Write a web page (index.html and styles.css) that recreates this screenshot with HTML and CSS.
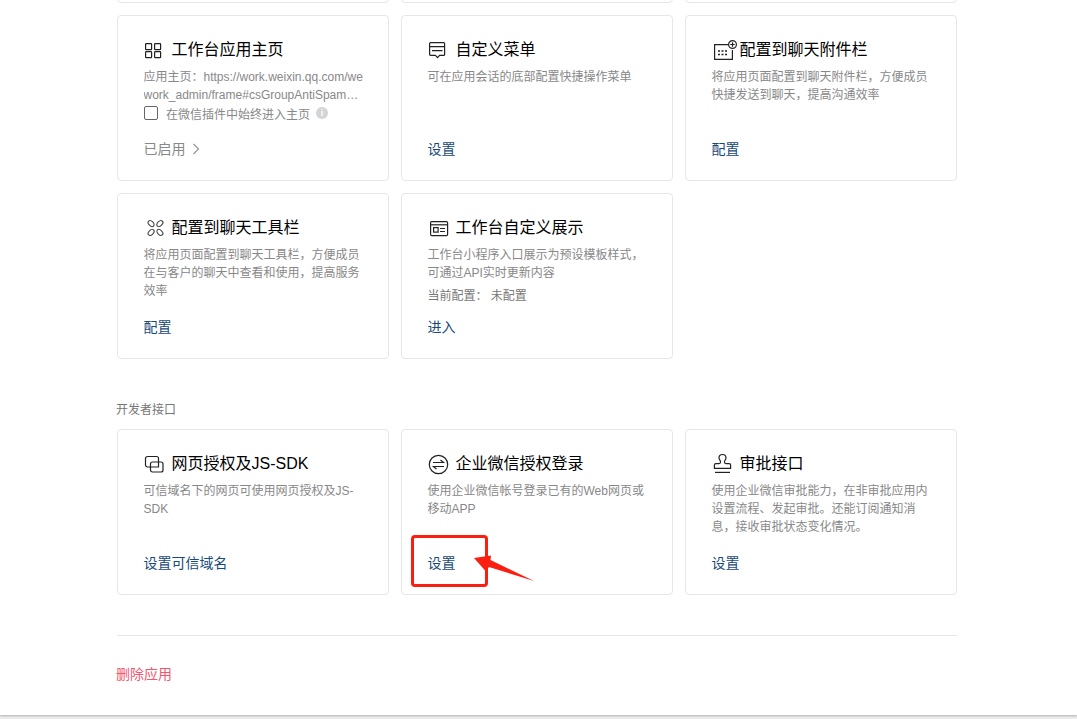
FILE: index.html
```html
<!DOCTYPE html>
<html lang="zh-CN">
<head>
<meta charset="utf-8">
<title>应用管理</title>
<link rel="stylesheet" href="styles.css">
</head>
<body>
<main class="page">
  <div class="content">
    <section class="grid">
      <article class="card"></article>
      <article class="card"></article>
      <article class="card"></article>

      <article class="card">
        <h3 class="head"><span class="ico"><svg width="28" height="24" viewBox="0 0 28 24" fill="none" stroke="#222" stroke-width="1.2"><rect x="1.6" y="5.6" width="6" height="6" rx=".6"/><rect x="10.6" y="5.6" width="6" height="6" rx=".6"/><rect x="1.6" y="13.6" width="6" height="6" rx=".6"/><rect x="10.6" y="13.6" width="6" height="6" rx=".6"/></svg></span>工作台应用主页</h3>
        <p class="desc clamp">应用主页：https://work.weixin.qq.com/wework_admin/frame#csGroupAntiSpamConfigurationPage</p>
        <label class="check"><span class="box"></span>在微信插件中始终进入主页<span class="info">i</span></label>
        <div class="foot muted">已启用<svg class="chev" width="8" height="12" viewBox="0 0 8 12" fill="none" stroke="#999" stroke-width="1.3"><path d="M1.5 1l5 5-5 5"/></svg></div>
      </article>

      <article class="card">
        <h3 class="head"><span class="ico"><svg width="28" height="24" viewBox="0 0 28 24" fill="none" stroke="#222" stroke-width="1.2"><path d="M2.6 4.6h13a1 1 0 0 1 1 1v10.8a1 1 0 0 1-1 1h-4l-2.1 2.2-2.1-2.2H2.6a1 1 0 0 1-1-1V5.600a1 1 0 0 1 1-1z"/><path d="M1.600 8.600h15M4 12.600h10.500"/></svg></span>自定义菜单</h3>
        <p class="desc">可在应用会话的底部配置快捷操作菜单</p>
        <a class="foot link">设置</a>
      </article>

      <article class="card">
        <h3 class="head"><span class="ico"><svg width="28" height="24" viewBox="0 0 28 24" fill="none" stroke="#222" stroke-width="1.200"><path d="M17 6.600H2.600v14.800h17.800V12"/><circle cx="20.500" cy="6.500" r="3.900"/><path d="M20.500 4.300v4.400M18.300 6.500h4.400"/><path d="M6 13h2M9.500 13h2M13 13h2M6 16.500h2M9.500 16.500h2M13 16.500h2" stroke-width="1.600"/></svg></span>配置到聊天附件栏</h3>
        <p class="desc">将应用页面配置到聊天附件栏，方便成员快捷发送到聊天，提高沟通效率</p>
        <a class="foot link">配置</a>
      </article>

      <article class="card">
        <h3 class="head"><span class="ico"><svg width="28" height="24" viewBox="0 0 28 24" fill="none" stroke="#444" stroke-width="1.100"><g transform="translate(11.500 12)"><ellipse cx="-4.400" cy="-4.400" rx="2.300" ry="3.500" transform="rotate(-45 -4.400 -4.400)"/><ellipse cx="4.400" cy="-4.400" rx="2.300" ry="3.500" transform="rotate(45 4.400 -4.400)"/><ellipse cx="-4.400" cy="4.400" rx="2.300" ry="3.500" transform="rotate(45 -4.400 4.400)"/><ellipse cx="4.400" cy="4.400" rx="2.300" ry="3.500" transform="rotate(-45 4.400 4.400)"/></g></svg></span>配置到聊天工具栏</h3>
        <p class="desc">将应用页面配置到聊天工具栏，方便成员在与客户的聊天中查看和使用，提高服务效率</p>
        <a class="foot link">配置</a>
      </article>

      <article class="card">
        <h3 class="head"><span class="ico"><svg width="28" height="24" viewBox="0 0 28 24" fill="none" stroke="#222" stroke-width="1.200"><rect x="2.600" y="5.600" width="17" height="14" rx="1.200"/><path d="M2.600 8.800h17"/><rect x="5.600" y="11.600" width="4.500" height="4.500"/><path d="M12 12.500h5M12 15.500h5"/></svg></span>工作台自定义展示</h3>
        <p class="desc">工作台小程序入口展示为预设模板样式，可通过API实时更新内容</p>
        <p class="desc current">当前配置： 未配置</p>
        <a class="foot link">进入</a>
      </article>
    </section>

    <h2 class="label">开发者接口</h2>
    <section class="grid">
      <article class="card">
        <h3 class="head"><span class="ico"><svg width="28" height="24" viewBox="0 0 28 24" fill="none" stroke="#222" stroke-width="1.200"><path d="M6 15H3.500A2 2 0 0 1 1.500 13V6.500a2 2 0 0 1 2-2h9a2 2 0 0 1 2 2V10"/><rect x="6.500" y="10" width="12.500" height="10" rx="2"/><path d="M6.500 15h8v-5"/></svg></span>网页授权及JS-SDK</h3>
        <p class="desc">可信域名下的网页可使用网页授权及JS-SDK</p>
        <a class="foot link">设置可信域名</a>
      </article>

      <article class="card">
        <h3 class="head"><span class="ico"><svg width="28" height="24" viewBox="0 0 28 24" fill="none" stroke="#222" stroke-width="1.200"><circle cx="10.500" cy="12.500" r="9.200"/><path d="M5 10.500h10.500l-3-2.500M16 14.500H5.500l3 2.500"/></svg></span>企业微信授权登录</h3>
        <p class="desc">使用企业微信帐号登录已有的Web网页或移动APP</p>
        <a class="foot link">设置</a>
        <span class="mark"></span>
        <svg class="arrow" width="62" height="33" viewBox="0 0 62 33"><path fill="#fb1f12" d="M1 8 18 5.500 17.500 10 61 31 16 17 12.500 21z"/></svg>
      </article>

      <article class="card">
        <h3 class="head"><span class="ico"><svg width="28" height="24" viewBox="0 0 28 24" fill="none" stroke="#222" stroke-width="1.200"><path d="M7 11.600c1.300 0 1.600-.8 1.600-1.800 0-1-1.600-2.300-1.600-3.800a3.500 3.500 0 0 1 7 0c0 1.500-1.600 2.800-1.600 3.800 0 1 .3 1.800 1.600 1.800h3.100a1.500 1.500 0 0 1 1.500 1.500v3.300H2.400v-3.300a1.500 1.500 0 0 1 1.500-1.500z"/><path d="M3 20.400h15"/></svg></span>审批接口</h3>
        <p class="desc">使用企业微信审批能力，在非审批应用内设置流程、发起审批。还能订阅通知消息，接收审批状态变化情况。</p>
        <a class="foot link">设置</a>
      </article>
    </section>

    <hr class="rule">
    <a class="danger">删除应用</a>
  </div>
</main>
</body>
</html>
```

FILE: styles.css
```css
* { box-sizing: border-box; }

html, body {
  margin: 0;
  height: 100%;
  overflow: hidden;
}

body {
  background: #ececec;
  font-family: "Liberation Sans", "Noto Sans CJK SC", sans-serif;
}

.page {
  height: 715px;
  background: #fff;
  overflow: hidden;
  box-shadow: 0 1px 2px rgba(0, 0, 0, .25);
}

.content {
  width: 957px;
  margin-top: -163px;
  padding-left: 117px;
}

.grid {
  display: grid;
  grid-template-columns: repeat(3, 272px);
  grid-auto-rows: 166px;
  gap: 12px;
}

.card {
  position: relative;
  display: flex;
  flex-direction: column;
  padding: 22px 21px 21px 25.5px;
  border: 1px solid #e4e6e9;
  border-radius: 4px;
  background: #fff;
}

.head {
  display: flex;
  align-items: center;
  height: 24px;
  margin: 0 0 6px;
  font-size: 16px;
  font-weight: 400;
  line-height: 24px;
  color: #000;
}

.ico {
  flex: none;
  display: block;
  width: 28px;
  height: 24px;
}

.ico svg {
  display: block;
  margin-left: .5px;
}

.desc {
  margin: 0;
  font-size: 12px;
  line-height: 18px;
  color: #888;
}

.clamp {
  display: -webkit-box;
  -webkit-box-orient: vertical;
  -webkit-line-clamp: 2;
  max-width: 222px;
  overflow: hidden;
  word-break: break-all;
}

.current {
  margin-top: 5px;
  color: #777;
}

.check {
  display: flex;
  align-items: center;
  height: 18px;
  margin-top: 0;
  font-size: 12px;
  color: #888;
}

.box {
  flex: none;
  width: 14px;
  height: 14px;
  margin: 0 8px 0 .5px;
  border: 1px solid #666;
  border-radius: 2px;
}

.info {
  flex: none;
  width: 12px;
  height: 12px;
  margin-left: 6px;
  border-radius: 50%;
  background: #d4d4d4;
  color: #fff;
  font-size: 9px;
  font-weight: 700;
  line-height: 12px;
  text-align: center;
}

.foot {
  display: flex;
  align-items: center;
  margin-top: auto;
  font-size: 14px;
  line-height: 20px;
}

.link { color: #174a7c; }

.muted { color: #888; }

.chev { margin-left: 6px; }

.label {
  margin: 42px 0 10px -1px;
  font-size: 12px;
  font-weight: 400;
  line-height: 18px;
  color: #777;
}

.rule {
  height: 1px;
  margin: 40px 0 28px;
  border: 0;
  background: #e4e6e9;
}

.danger {
  display: block;
  margin-left: -1px;
  font-size: 14px;
  line-height: 20px;
  color: #f4566f;
}

.mark {
  position: absolute;
  left: 9px;
  top: 105px;
  width: 77px;
  height: 52px;
  border: 3px solid #fb1f12;
  border-radius: 4px;
}

.arrow {
  position: absolute;
  left: 71px;
  top: 120px;
}
```
